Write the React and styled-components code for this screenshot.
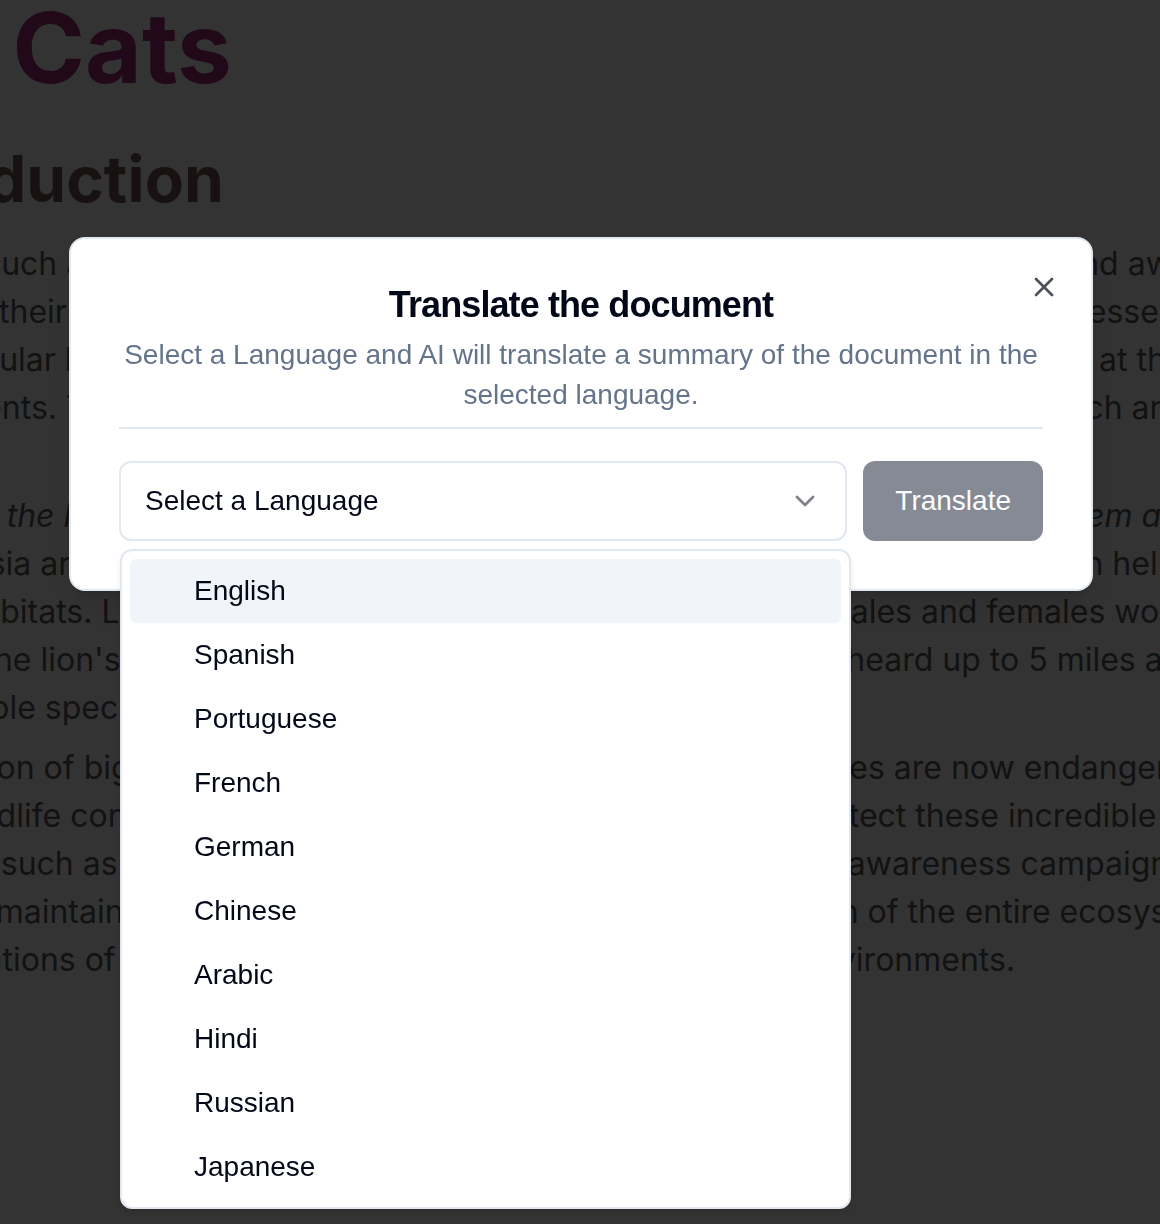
import React from "react";
import styled, { createGlobalStyle } from "styled-components";
import { X, ChevronDown } from "lucide-react";

const GlobalStyle = createGlobalStyle`
  html, body {
    margin: 0;
    padding: 0;
    background: #ffffff;
    overflow: hidden;
  }
  * { box-sizing: border-box; }
`;

const languages = [
  "English",
  "Spanish",
  "Portuguese",
  "French",
  "German",
  "Chinese",
  "Arabic",
  "Hindi",
  "Russian",
  "Japanese",
];

// the article behind the dialog, one row per rendered line
const paragraphs = [
  {
    gap: 23,
    lines: [
      ["animals such as lions, tigers", "and aware of"],
      ["roving in their natural habitats", "are essential to"],
      ["the muscular bodies make them", "sit at the very"],
      ["components. These magnificent", "which are vital."],
    ],
  },
  {
    gap: 60,
    lines: [
      ["hailed as the lion", "ecosystem as such", true],
      ["rest of Asia are home to", "often help keep"],
      ["varied habitats. Lions live in", "males and females work as a"],
      ["prides. The lion's roar", "heard up to 5 miles away in"],
      ["indomitable species.", ""],
    ],
  },
  {
    gap: 12,
    lines: [
      ["exploitation of big cats", "species are now endangered, so"],
      ["smart wildlife conservation", "protect these incredible tigers,"],
      ["methods such as wildlife", "public awareness campaigns help"],
      ["helps us maintain", "function of the entire ecosystem in"],
      [
        "the migrations of big cats to thrive and roam far in their native environments.",
        null,
      ],
    ],
  },
];

const Page = styled.div`
  position: relative;
  width: 1160px;
  height: 1224px;
  overflow: hidden;
  background: #ffffff;
`;

const Article = styled.article`
  width: 1400px;
  margin-left: -140px;
  font-family: Inter, "Noto Sans", sans-serif;
  font-size: 32px;
  line-height: 48px;
  color: #5c5c5c;
`;

const DocTitle = styled.h1`
  margin: 0 0 0 -24px;
  font-size: 98px;
  line-height: 96px;
  font-weight: 700;
  color: #a6317f;
`;

const DocHeading = styled.h2`
  margin: 45px 0 0 -19px;
  font-size: 64px;
  line-height: 76px;
  font-weight: 700;
  color: #735c55;
`;

const Paragraph = styled.div`
  margin-top: ${(p) => p.$gap}px;
`;

const TextLine = styled.div`
  display: flex;
  justify-content: ${(p) => (p.$single ? "flex-start" : "space-between")};
  white-space: nowrap;
  font-style: ${(p) => (p.$italic ? "italic" : "normal")};
`;

const Overlay = styled.div`
  position: fixed;
  inset: 0;
  background: rgba(0, 0, 0, 0.8);
`;

const Dialog = styled.div`
  position: absolute;
  top: 237px;
  left: 69px;
  width: 1024px;
  display: grid;
  gap: 32px;
  padding: 48px;
  background: #ffffff;
  border: 2px solid #e2e8f0;
  border-radius: 16px;
  box-shadow: 0 20px 25px -5px rgba(0, 0, 0, 0.1), 0 8px 10px -6px rgba(0, 0, 0, 0.1);
  font-family: "Liberation Sans", Arial, sans-serif;
  color: #020817;
`;

const Header = styled.div`
  display: flex;
  flex-direction: column;
  gap: 12px;
  text-align: center;
`;

const Title = styled.h2`
  margin: 0;
  font-size: 36px;
  line-height: 36px;
  font-weight: 700;
  letter-spacing: -0.9px;
  color: #020817;
`;

const Description = styled.p`
  margin: 0;
  font-size: 28px;
  line-height: 40px;
  color: #64748b;
`;

const Separator = styled.div`
  height: 2px;
  background: #e2e8f0;
`;

const CloseButton = styled.button`
  position: absolute;
  top: 32px;
  right: 31px;
  width: 32px;
  height: 32px;
  padding: 0;
  border: none;
  background: transparent;
  color: #020817;
  opacity: 0.7;
  display: flex;
  align-items: center;
  justify-content: center;
  cursor: pointer;
`;

const Controls = styled.div`
  display: flex;
  gap: 16px;
`;

const Trigger = styled.button`
  flex: 1;
  height: 80px;
  padding: 0 24px;
  display: flex;
  align-items: center;
  justify-content: space-between;
  background: #ffffff;
  border: 2px solid #e2e8f0;
  border-radius: 12px;
  font-family: "Liberation Sans", Arial, sans-serif;
  font-size: 28px;
  line-height: 40px;
  color: #020817;
  text-align: left;

  svg {
    opacity: 0.5;
  }
`;

const TranslateButton = styled.button`
  height: 80px;
  padding: 0 32px;
  border: none;
  border-radius: 12px;
  background: #0f172a;
  opacity: 0.5;
  color: #f8fafc;
  font-family: "Liberation Sans", Arial, sans-serif;
  font-size: 28px;
  font-weight: 500;
`;

const Listbox = styled.div`
  position: absolute;
  top: 549px;
  left: 120px;
  width: 731px;
  padding: 8px;
  background: #ffffff;
  border: 2px solid #e2e8f0;
  border-radius: 12px;
  box-shadow: 0 4px 6px -1px rgba(0, 0, 0, 0.1), 0 2px 4px -2px rgba(0, 0, 0, 0.1);
  font-family: "Liberation Sans", Arial, sans-serif;
`;

const Option = styled.div`
  height: 64px;
  padding: 12px 16px 12px 64px;
  border-radius: 6px;
  font-size: 28px;
  line-height: 40px;
  color: #020817;
  background: ${(p) => (p.$active ? "#f1f5f9" : "transparent")};
`;

export default function App() {
  return (
    <Page>
      <GlobalStyle />
      <Article>
        <DocTitle>Big Cats</DocTitle>
        <DocHeading>Introduction</DocHeading>
        {paragraphs.map((para, i) => (
          <Paragraph key={i} $gap={para.gap}>
            {para.lines.map(([start, end, italic], j) => (
              <TextLine key={j} $italic={italic} $single={end === null}>
                <span>{start}</span>
                {end && <span>{end}</span>}
              </TextLine>
            ))}
          </Paragraph>
        ))}
      </Article>

      <Overlay />

      <Dialog role="dialog">
        <Header>
          <Title>Translate the document</Title>
          <Description>
            Select a Language and AI will translate a summary of the document in the
            selected language.
          </Description>
          <Separator />
        </Header>
        <Controls>
          <Trigger>
            <span>Select a Language</span>
            <ChevronDown size={32} strokeWidth={2} />
          </Trigger>
          <TranslateButton disabled>Translate</TranslateButton>
        </Controls>
        <CloseButton aria-label="Close">
          <X size={32} strokeWidth={2} />
        </CloseButton>
      </Dialog>

      <Listbox role="listbox">
        {languages.map((lang, i) => (
          <Option key={lang} $active={i === 0}>
            {lang}
          </Option>
        ))}
      </Listbox>
    </Page>
  );
}
